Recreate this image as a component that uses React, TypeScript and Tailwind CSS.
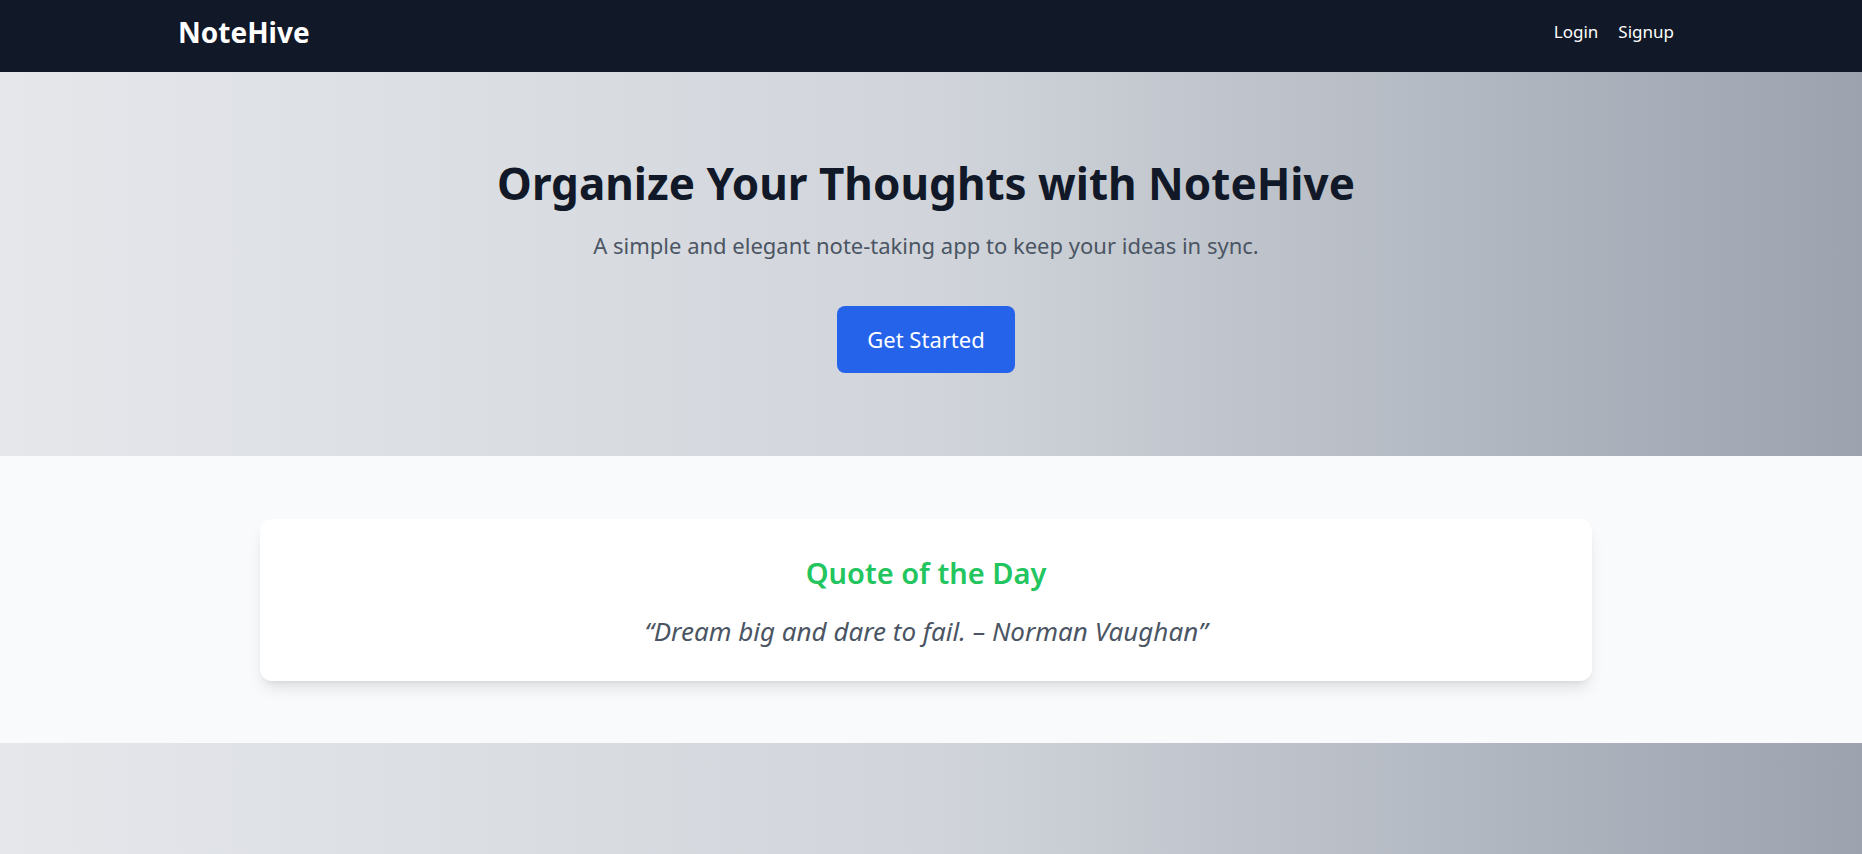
import React from "react";

const font = { fontFamily: '"Noto Sans", "Open Sans", sans-serif' };

function Navbar() {
  return (
    <nav className="h-[72px] bg-[#111827] pr-[10px] pb-2">
      <div className="mx-auto flex h-full max-w-[1536px] items-center justify-between px-5">
        <a href="#" className="text-[28px] font-bold leading-none text-white">
          NoteHive
        </a>
        <div className="flex items-center gap-5 text-[17px] text-white">
          <a href="#">Login</a>
          <a href="#">Signup</a>
        </div>
      </div>
    </nav>
  );
}

function Hero() {
  return (
    <section className="bg-linear-to-r from-[#e5e7eb] via-[#d1d5db] to-[#9ca3af] pr-[10px] pt-[89px] pb-[83px]">
      <div className="flex flex-col items-center text-center">
        <h1 className="text-[44px] font-bold leading-none text-[#111827]">Organize Your Thoughts with NoteHive</h1>
        <p className="mt-6 text-[22px] leading-8 text-[#4b5563]">
          A simple and elegant note-taking app to keep your ideas in sync.
        </p>
        <button className="mt-[45px] h-[67px] w-[178px] rounded-lg bg-[#2563eb] text-[22px] text-white hover:bg-[#1d4ed8]">
          Get Started
        </button>
      </div>
    </section>
  );
}

function QuoteOfTheDay() {
  return (
    <section className="bg-[#f9fafb] pr-[10px] pt-[63px] pb-[62px]">
      <div className="mx-auto w-[1332px] rounded-xl bg-white px-8 pt-[36px] pb-[34px] text-center shadow-lg">
        <h2 className="text-[29px] font-semibold leading-9 text-[#22c55e]">Quote of the Day</h2>
        <p className="mt-6 text-[26px] italic leading-8 text-[#4b5563]">“Dream big and dare to fail. – Norman Vaughan”</p>
      </div>
    </section>
  );
}

export default function App() {
  return (
    <div style={font} className="min-h-screen">
      <Navbar />
      <Hero />
      <QuoteOfTheDay />
      <section className="h-[300px] bg-linear-to-r from-[#e5e7eb] via-[#d1d5db] to-[#9ca3af]" />
    </div>
  );
}
